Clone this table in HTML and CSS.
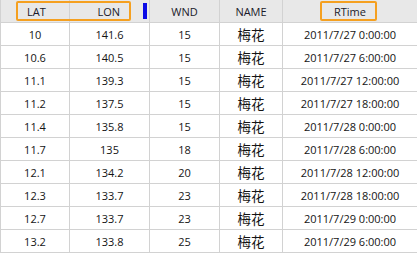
FILE: index.html
```html
<!DOCTYPE html>
<html>
<head>
<meta charset="utf-8">
<link rel="stylesheet" href="styles.css">
</head>
<body>
<div class="grid-wrap">
  <div class="grid">
    <div class="hd hd-lat">LAT</div>
    <div class="hd hd-lon">LON</div>
    <div class="hd">WND</div>
    <div class="hd">NAME</div>
    <div class="hd">RTime</div>

    <div class="c">10</div><div class="c">141.6</div><div class="c">15</div><div class="c cjk">梅花</div><div class="c">2011/7/27 0:00:00</div>
    <div class="c">10.6</div><div class="c">140.5</div><div class="c">15</div><div class="c cjk">梅花</div><div class="c">2011/7/27 6:00:00</div>
    <div class="c">11.1</div><div class="c">139.3</div><div class="c">15</div><div class="c cjk">梅花</div><div class="c">2011/7/27 12:00:00</div>
    <div class="c">11.2</div><div class="c">137.5</div><div class="c">15</div><div class="c cjk">梅花</div><div class="c">2011/7/27 18:00:00</div>
    <div class="c">11.4</div><div class="c">135.8</div><div class="c">15</div><div class="c cjk">梅花</div><div class="c">2011/7/28 0:00:00</div>
    <div class="c">11.7</div><div class="c">135</div><div class="c">18</div><div class="c cjk">梅花</div><div class="c">2011/7/28 6:00:00</div>
    <div class="c">12.1</div><div class="c">134.2</div><div class="c">20</div><div class="c cjk">梅花</div><div class="c">2011/7/28 12:00:00</div>
    <div class="c">12.3</div><div class="c">133.7</div><div class="c">23</div><div class="c cjk">梅花</div><div class="c">2011/7/28 18:00:00</div>
    <div class="c">12.7</div><div class="c">133.7</div><div class="c">23</div><div class="c cjk">梅花</div><div class="c">2011/7/29 0:00:00</div>
    <div class="c">13.2</div><div class="c">133.8</div><div class="c">25</div><div class="c cjk">梅花</div><div class="c">2011/7/29 6:00:00</div>
  </div>
  <div class="hl hl-latlon"></div>
  <div class="hl hl-rtime"></div>
  <div class="resize-bar"></div>
</div>
</body>
</html>
```
FILE: styles.css
```css
html, body {
  margin: 0;
  padding: 0;
  background: #ffffff;
}
.grid-wrap {
  position: relative;
  width: 417px;
  height: 253px;
  overflow: hidden;
}
.grid {
  display: grid;
  grid-template-columns: 69px 80px 70px 63px 135px;
  grid-auto-rows: 23px;
  font-family: "Open Sans", "Noto Sans", sans-serif;
  font-size: 11px;
  color: #141414;
}
.hd, .c {
  box-sizing: border-box;
  border-left: 1px solid #d2d2d2;
  border-bottom: 1px solid #d2d2d2;
  display: flex;
  align-items: center;
  justify-content: center;
  white-space: nowrap;
}
.hd {
  background: #e8e8e8;
  color: #1a1a2a;
}
.hd-lat {
  justify-content: flex-start;
  padding-left: 26px;
}
.hd-lon {
  justify-content: flex-end;
  padding-right: 29px;
}
.c {
  background: #ffffff;
}
.cjk {
  font-family: "Noto Sans CJK SC", sans-serif;
  font-size: 13.5px;
}
.hl {
  position: absolute;
  box-sizing: border-box;
  border: 2px solid #f5a020;
  border-radius: 2px;
  top: 1px;
  height: 20px;
}
.hl-latlon {
  left: 16px;
  width: 115px;
}
.hl-rtime {
  left: 320px;
  width: 57px;
}
.resize-bar {
  position: absolute;
  left: 143px;
  top: 3px;
  width: 4px;
  height: 16px;
  background: #0a0ae6;
}
```
